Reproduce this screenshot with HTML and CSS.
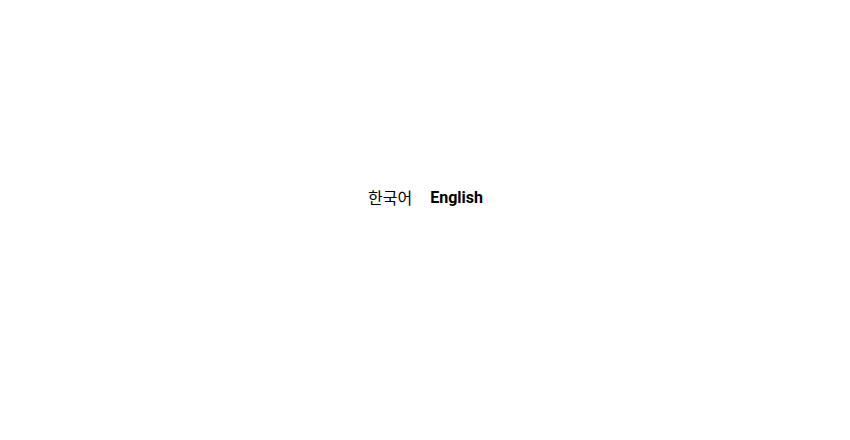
FILE: index.html
```html
<!DOCTYPE html>
<html lang="ko">
<head>
<meta charset="utf-8">
<link rel="stylesheet" href="styles.css">
</head>
<body>
<main class="page">
  <nav class="langs">
    <a class="lang" href="#">한국어</a>
    <a class="lang active" href="#">English</a>
  </nav>
</main>
</body>
</html>
```
FILE: styles.css
```css
html, body { margin: 0; padding: 0; background: #fff; }
.page {
  width: 850px;
  height: 440px;
  display: flex;
  align-items: center;
  justify-content: center;
  padding-bottom: 46px;
  box-sizing: border-box;
}
.langs {
  display: flex;
  gap: 18px;
  align-items: center;
  font-family: Roboto, "Noto Sans CJK KR", sans-serif;
  font-size: 16px;
  margin-left: 1px;
}
.lang { color: #000; text-decoration: none; }
.lang.active { font-weight: 700; }
```
